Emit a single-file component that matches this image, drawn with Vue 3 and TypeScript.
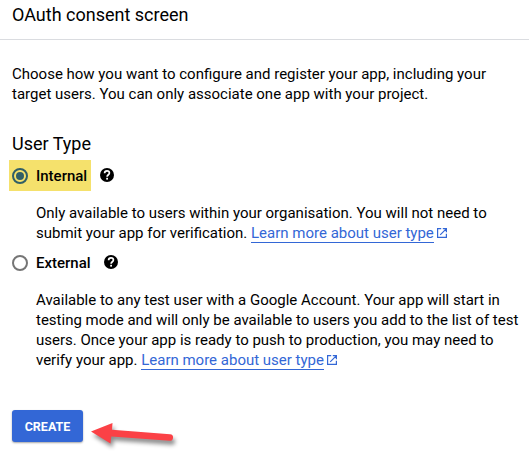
<template>
  <div class="consent-page">
    <header class="page-header">
      <h1>OAuth consent screen</h1>
    </header>

    <main class="content">
      <p class="intro">
        <span v-for="line in intro" :key="line" class="line">{{ line }}</span>
      </p>

      <h2>User Type</h2>

      <section v-for="option in options" :key="option.value" class="option" :class="option.value">
        <div class="option-head">
          <label class="radio-label" :class="{ highlighted: selected === option.value }" @click="selected = option.value">
            <span class="radio" :class="{ checked: selected === option.value }"></span>
            <span class="option-name">{{ option.label }}</span>
          </label>
          <svg class="help" viewBox="0 0 14 14" width="14" height="14">
            <circle cx="7" cy="7" r="7" fill="#000" />
            <path d="M4.6 5.3C4.6 3.8 5.6 2.9 7 2.9s2.4.9 2.4 2.2C9.4 6.7 7.1 6.8 7.1 8.8" fill="none" stroke="#fff" stroke-width="1.7" />
            <rect x="6.2" y="9.8" width="1.8" height="1.8" fill="#fff" />
          </svg>
        </div>
        <p class="description">
          <span v-for="line in option.lines" :key="line" class="line">{{ line }}</span>
          <span class="line">{{ option.lastLine }} <a class="link">Learn more about user type</a><svg class="external-icon" viewBox="0 0 10 10" width="10" height="10">
              <path d="M4.2.6H.6v8.8h8.8V5.8M5.8.6h3.6v3.6M9.2.8 3.2 6.8" fill="none" stroke="#3367d6" stroke-width="1.2" />
            </svg></span>
        </p>
      </section>

      <div class="actions">
        <button class="create-button" type="button">CREATE</button>
        <svg class="arrow" viewBox="0 0 90 34" width="90" height="34">
          <path d="M2 11.5 23.5 3l-.5 6.7 58 4.5a3.3 3.3 0 0 1-.5 6.6L22.3 16.5 21.5 23.5Z" fill="#fb4146" />
        </svg>
      </div>
    </main>
  </div>
</template>

<script setup lang="ts">
import { ref } from 'vue';

type UserType = 'internal' | 'external';

interface Option {
    value: UserType;
    label: string;
    lines: string[];
    lastLine: string;
}

const selected = ref<UserType>('internal');

const intro: string[] = [
    'Choose how you want to configure and register your app, including your',
    'target users. You can only associate one app with your project.'
];

const options: Option[] = [
    {
        value: 'internal',
        label: 'Internal',
        lines: ['Only available to users within your organisation. You will not need to'],
        lastLine: 'submit your app for verification.'
    },
    {
        value: 'external',
        label: 'External',
        lines: [
            'Available to any test user with a Google Account. Your app will start in',
            'testing mode and will only be available to users you add to the list of test',
            'users. Once your app is ready to push to production, you may need to'
        ],
        lastLine: 'verify your app.'
    }
];
</script>

<style>
body {
    margin: 0;
    background: #fff;
}
</style>

<style scoped>
.consent-page {
    height: 459px;
    overflow: hidden;
    font-family: Roboto, "Liberation Sans", sans-serif;
    font-size: 15px;
    line-height: 20px;
    color: #000;
}

.page-header {
    height: 39px;
    box-sizing: border-box;
    padding: 3px 12px 0;
    box-shadow: 0 1px 0 #dadce0;
}

h1, h2 {
    margin: 0;
    font-size: 18px;
    font-weight: 400;
    line-height: 24px;
}

.content {
    padding: 25px 0 0 12px;
}

p {
    margin: 0;
}

.line {
    display: block;
    white-space: nowrap;
}

h2 {
    margin: 28px 0 4px;
}

.option-head {
    display: flex;
    align-items: center;
    height: 31px;
    margin-left: -3px;
}

.external .option-head {
    margin-top: 4px;
}

.radio-label {
    display: flex;
    align-items: center;
    gap: 8px;
    height: 31px;
    padding: 0 4px 0 3px;
}

.radio-label.highlighted {
    background: #f5e16c;
}

.radio {
    box-sizing: border-box;
    display: flex;
    align-items: center;
    justify-content: center;
    width: 16px;
    height: 16px;
    border: 2px solid #757575;
    border-radius: 50%;
}

.radio.checked {
    border-color: #315f66;
}

.radio.checked::after {
    content: "";
    width: 8px;
    height: 8px;
    border-radius: 50%;
    background: #315f66;
}

.option-name {
    font-weight: 500;
}

.help {
    margin-left: 9px;
}

.internal .help {
    margin-bottom: 2px;
}

.external .help {
    margin-bottom: 1px;
}

.description {
    padding: 12px 0 0 24px;
}

.link {
    color: #3367d6;
    border-bottom: 1px solid #3367d6;
}

.external-icon {
    margin-left: 3px;
}

.actions {
    display: flex;
    align-items: flex-start;
    margin-top: 40px;
}

.create-button {
    width: 71px;
    height: 32px;
    padding: 0;
    border: 0;
    border-radius: 3px;
    background: #3367d6;
    box-shadow: 0 1px 2px rgba(0, 0, 0, 0.35);
    color: #fff;
    font-family: inherit;
    font-size: 12.5px;
    font-weight: 700;
}

.arrow {
    margin: 10px 0 0 6px;
    overflow: visible;
    filter: drop-shadow(2px 4px 2px rgba(0, 0, 0, 0.45));
}
</style>
